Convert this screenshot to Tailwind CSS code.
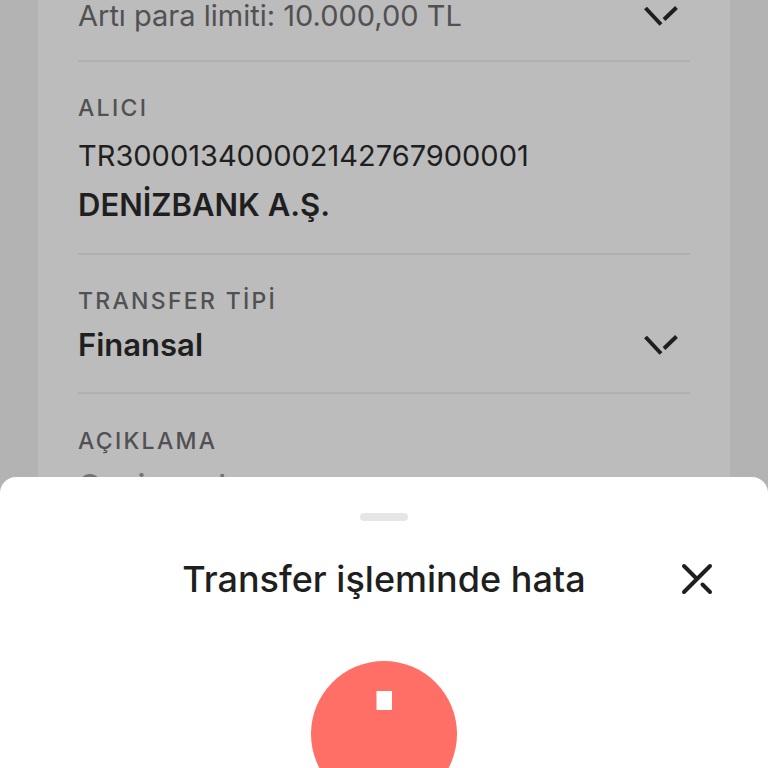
<!DOCTYPE html>
<html lang="tr">
<head>
<meta charset="utf-8">
<meta name="viewport" content="width=device-width, initial-scale=1">
<title>Transfer</title>
<script src="https://cdn.jsdelivr.net/npm/@tailwindcss/browser@4"></script>
</head>
<body class="h-screen overflow-hidden bg-[#b3b3b3] font-['Inter','Liberation_Sans',sans-serif] text-[#1f1f1f]">
<main class="mx-[38px] min-h-screen bg-[#bcbcbc] px-10">
  <section class="border-b-2 border-[#b0b0b0] pb-7">
    <button type="button" class="flex w-full items-center justify-between pr-3 text-left text-[29px] leading-8 text-[#515153]">
      <span>Artı para limiti: 10.000,00 TL</span>
      <svg class="h-5 w-[34px]" viewBox="0 0 34 20" fill="none" stroke="#1f1f1f" stroke-width="4" aria-hidden="true"><path d="M1.500 2 17 18.500M20 13.500 32.500 1.500"/></svg>
    </button>
  </section>
  <section class="border-b-2 border-[#b0b0b0] pt-[34px] pb-8">
    <h2 class="text-[23px] leading-6 font-medium tracking-widest text-[#515153]">ALICI</h2>
    <p class="mt-5 text-[29px] leading-8">TR300013400002142767900001</p>
    <p class="mt-[17px] text-[31px] leading-8 font-semibold">DENİZBANK A.Ş.</p>
  </section>
  <section class="border-b-2 border-[#b0b0b0] pt-[34px] pb-[31px]">
    <label for="type" class="block text-[23px] leading-6 font-medium tracking-widest text-[#515153]">TRANSFER TİPİ</label>
    <div class="mt-4 grid items-center pr-3">
      <select id="type" class="col-start-1 row-start-1 h-8 w-full appearance-none bg-transparent text-[31px] leading-8 font-semibold">
        <option>Finansal</option>
      </select>
      <svg class="pointer-events-none col-start-1 row-start-1 h-5 w-[34px] justify-self-end" viewBox="0 0 34 20" fill="none" stroke="#1f1f1f" stroke-width="4" aria-hidden="true"><path d="M1.500 2 17 18.500M20 13.500 32.500 1.500"/></svg>
    </div>
  </section>
  <section class="pt-[35px]">
    <label for="note" class="block text-[23px] leading-6 font-medium tracking-widest text-[#515153]">AÇIKLAMA</label>
    <input id="note" type="text" placeholder="Opsiyonel" class="mt-[17px] h-8 w-full bg-transparent text-[31px] leading-8 font-medium placeholder:text-[#737375]">
  </section>
</main>
<div role="dialog" aria-labelledby="title" class="fixed inset-x-0 top-[477px] bottom-0 overflow-hidden rounded-t-2xl bg-white">
  <div class="mx-auto mt-9 h-2 w-12 rounded-full bg-[#e6e6e8]"></div>
  <div class="mt-[34px] grid grid-cols-[1fr_auto_1fr] items-center px-[55px]">
    <h1 id="title" class="col-start-2 text-[36px] leading-12 font-medium">Transfer işleminde hata</h1>
    <button type="button" aria-label="Kapat" class="justify-self-end">
      <svg class="size-8" viewBox="0 0 32 32" fill="none" stroke="#1f1f1f" stroke-width="4" stroke-linecap="round" aria-hidden="true"><path d="M3 3 16 16M3 29 29 3M21.500 21.500 29 29"/></svg>
    </button>
  </div>
  <svg class="mx-auto mt-[58px] size-[146px]" viewBox="0 0 146 146" aria-hidden="true"><circle cx="73" cy="73" r="73" fill="#ff6f66"/><path fill="#fff" d="M65.500 30h15.500v19H65.500z"/></svg>
</div>
</body>
</html>
